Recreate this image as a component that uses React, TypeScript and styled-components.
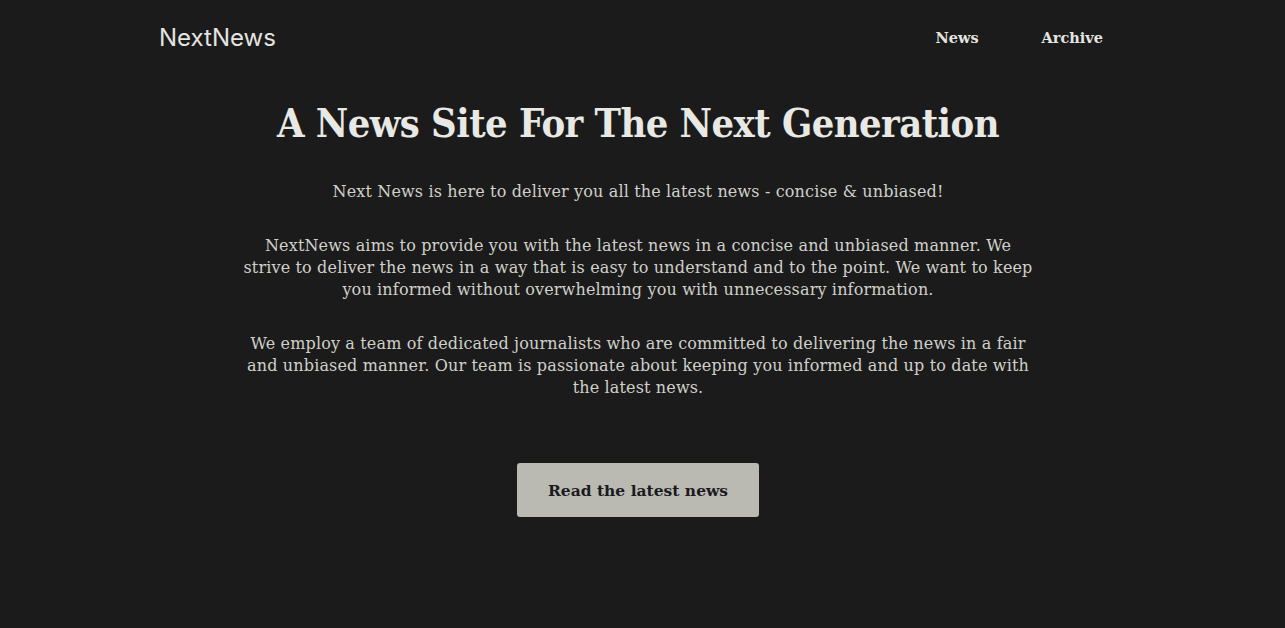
import React from "react";
import styled, { createGlobalStyle } from "styled-components";

const Global = createGlobalStyle`
  html, body { margin: 0; padding: 0; background: #1b1b1b; }
  body { font-family: "DejaVu Serif", "Liberation Serif", serif; color: #d6d6d0; }
`;

const Page = styled.div`
  min-height: 628px;
  background: #1b1b1b;
  display: flex;
  flex-direction: column;
  align-items: center;
  padding-right: 9px;
`;

const Header = styled.header`
  width: 958px;
  height: 74px;
  display: flex;
  align-items: center;
  justify-content: space-between;
`;

const Logo = styled.div`
  font-family: Inter, "Noto Sans", sans-serif;
  font-size: 24px;
  font-weight: 400;
  color: #e4e4e0;
`;

const Nav = styled.nav`
  display: flex;
  gap: 35px;
`;

const NavLink = styled.a`
  padding: 0 14px;
  font-family: "DejaVu Serif", serif;
  font-weight: 700;
  font-size: 14.5px;
  color: #e4e4e0;
  text-decoration: none;
`;

const Main = styled.main`
  width: 796px;
  display: flex;
  flex-direction: column;
  align-items: center;
  text-align: center;
`;

const Title = styled.h1`
  margin: 25px 0 0;
  font-family: "DejaVu Serif Condensed", "DejaVu Serif", serif;
  font-size: 39.5px;
  letter-spacing: -0.55px;
  font-weight: 700;
  color: #e8e8e4;
  line-height: 48px;
  white-space: nowrap;
`;

const Lead = styled.p`
  margin: 34px 0 0;
  font-size: 16px;
  line-height: 22px;
  letter-spacing: 0.15px;
  color: #d0d0ca;
`;

const Para = styled.p`
  margin: 32px 0 0;
  font-size: 16px;
  line-height: 22px;
  letter-spacing: 0.15px;
  color: #d0d0ca;
`;

const Button = styled.button`
  margin-top: 64px;
  width: 242px;
  height: 54px;
  border: none;
  border-radius: 3px;
  background: #babab3;
  color: #1a1a20;
  font-family: "DejaVu Serif", serif;
  font-weight: 700;
  font-size: 15.5px;
  cursor: pointer;
`;

export default function App() {
  return (
    <>
      <Global />
      <Page>
        <Header>
          <Logo>NextNews</Logo>
          <Nav>
            <NavLink href="#">News</NavLink>
            <NavLink href="#">Archive</NavLink>
          </Nav>
        </Header>
        <Main>
          <Title>A News Site For The Next Generation</Title>
          <Lead>Next News is here to deliver you all the latest news - concise &amp; unbiased!</Lead>
          <Para>
            NextNews aims to provide you with the latest news in a concise and unbiased manner. We
            strive to deliver the news in a way that is easy to understand and to the point. We want to
            keep you informed without overwhelming you with unnecessary information.
          </Para>
          <Para>
            We employ a team of dedicated journalists who are committed to delivering the news in a fair
            and unbiased manner. Our team is passionate about keeping you informed and up to date with
            the latest news.
          </Para>
          <Button>Read the latest news</Button>
        </Main>
      </Page>
    </>
  );
}
